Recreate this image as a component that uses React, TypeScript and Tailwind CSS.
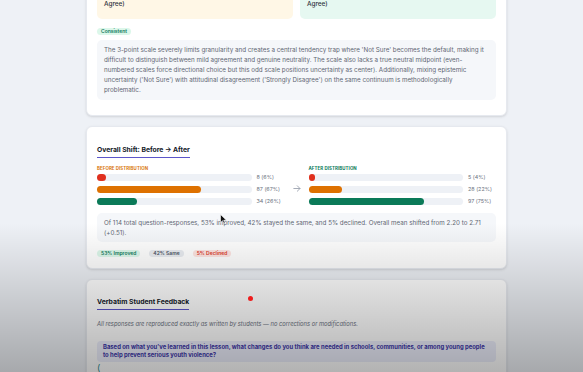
import React from "react";

interface Bar {
  pct: number;
  color: string;
  label: string;
}

const before: Bar[] = [
  { pct: 6, color: "bg-[#e0301e]", label: "8 (6%)" },
  { pct: 67, color: "bg-[#de7100]", label: "87 (67%)" },
  { pct: 26, color: "bg-[#0b7a58]", label: "34 (26%)" },
];

const after: Bar[] = [
  { pct: 4, color: "bg-[#e0301e]", label: "5 (4%)" },
  { pct: 22, color: "bg-[#de7100]", label: "28 (22%)" },
  { pct: 75, color: "bg-[#0b7a58]", label: "97 (75%)" },
];

function Distribution({ title, titleColor, bars }: { title: string; titleColor: string; bars: Bar[] }) {
  return (
    <div className="flex flex-1 flex-col">
      <div className={`text-[4.4px] font-bold uppercase tracking-[0.02em] leading-[6px] mb-[1.5px] ${titleColor}`}>{title}</div>
      <div className="flex flex-col gap-[5px]">
        {bars.map((b) => (
          <div key={b.label} className="flex items-center gap-[5px]">
            <div className="h-[7px] flex-1 rounded-full bg-[#eef1f6]">
              <div className={`h-full rounded-full ${b.color}`} style={{ width: `${b.pct}%` }} />
            </div>
            <span className="w-[28px] text-[5.4px] leading-[7px] text-[#6b7280]">{b.label}</span>
          </div>
        ))}
      </div>
    </div>
  );
}

function SectionTitle({ children }: { children: React.ReactNode }) {
  return (
    <div className="flex">
      <h3 className="border-b-[1.5px] border-[#5b55c9] pb-[3px] text-[6.8px] font-bold leading-[9px] text-[#111827]">
        {children}
      </h3>
    </div>
  );
}

function Pill({ className, children }: { className: string; children: React.ReactNode }) {
  return <span className={`rounded-full px-[4px] text-[5px] font-semibold leading-[7px] ${className}`}>{children}</span>;
}

export default function App() {
  return (
    <div className="relative h-[372px] w-full overflow-hidden bg-[#eef1f6] font-['Inter',sans-serif]">
      <div className="mt-[-35px] flex flex-col gap-[10px] pl-[86px] pr-[76px]">
        {/* Scale critique card */}
        <div className="rounded-[6px] border border-[#e6e9ef] bg-white px-[10px] pt-[18px] pb-[15px] shadow-sm">
          <div className="flex gap-[7px]">
            <div className="flex-1 overflow-hidden rounded-[5px] bg-[#fff7e6] px-[7px] pt-[7px] pb-[10px] text-[6.4px] font-medium leading-[9px] text-[#2f3540]">
              <div className="whitespace-nowrap">Before: 3-point (Strongly Disagree / Not Sure / Strongly</div>
              <div>Agree)</div>
            </div>
            <div className="flex-1 overflow-hidden rounded-[5px] bg-[#e6f8f1] px-[7px] pt-[7px] pb-[10px] text-[6.4px] font-medium leading-[9px] text-[#2f3540]">
              <div className="whitespace-nowrap">After: 3-point (Strongly Disagree / Not Sure / Strongly</div>
              <div>Agree)</div>
            </div>
          </div>
          <div className="mt-[9px] flex">
            <Pill className="bg-[#dcf7ea] font-bold text-[#0f7a5c]">Consistent</Pill>
          </div>
          <div className="mt-[5px] rounded-[5px] bg-[#f5f7fa] px-[7px] pt-[5px] pb-[5px] text-[6.25px] leading-[10px] text-[#5f6673]">
            The 3-point scale severely limits granularity and creates a central tendency trap where 'Not Sure' becomes the default, making it difficult to distinguish between mild agreement and genuine neutrality. The scale also lacks a true neutral midpoint (even-numbered scales force directional choice but this odd scale positions uncertainty as center). Additionally, mixing epistemic uncertainty ('Not Sure') with attitudinal disagreement ('Strongly Disagree') on the same continuum is methodologically problematic.
          </div>
        </div>

        {/* Overall shift card */}
        <div className="rounded-[6px] border border-[#e6e9ef] bg-white px-[10px] pt-[18px] pb-[11px] shadow-sm">
          <SectionTitle>Overall Shift: Before → After</SectionTitle>
          <div className="mt-[8px] flex items-center">
            <Distribution title="Before Distribution" titleColor="text-[#d9770a]" bars={before} />
            <div className="flex w-[24px] justify-center pt-[6px]">
              <svg width="8" height="7" viewBox="0 0 8 7" fill="none" stroke="#9ca3af" strokeWidth="0.9" strokeLinecap="round" strokeLinejoin="round">
                <path d="M0.8 3.5h6.2M4.3 0.8l2.7 2.7-2.7 2.7" />
              </svg>
            </div>
            <Distribution title="After Distribution" titleColor="text-[#0b7a58]" bars={after} />
          </div>
          <div className="mt-[8px] rounded-[5px] bg-[#f5f7fa] px-[7px] pt-[5px] pb-[4px] text-[6.25px] leading-[10px] text-[#5f6673]">
            Of 114 total question-responses, 53% improved, 42% stayed the same, and 5% declined. Overall mean shifted from 2.20 to 2.71 (+0.51).
          </div>
          <div className="mt-[8px] flex gap-[9px]">
            <Pill className="bg-[#dcf7ea] text-[#0f7a5c]">53% Improved</Pill>
            <Pill className="bg-[#e8ebf0] text-[#4b5563]">42% Same</Pill>
            <Pill className="bg-[#fde4e1] text-[#dc3b2b]">5% Declined</Pill>
          </div>
        </div>

        {/* Verbatim feedback card */}
        <div className="rounded-[6px] border border-[#e6e9ef] bg-white px-[10px] pt-[17px] pb-[20px] shadow-sm">
          <SectionTitle>Verbatim Student Feedback</SectionTitle>
          <p className="mt-[10px] text-[5.8px] italic leading-[8px] text-[#6b7280]">
            All responses are reproduced exactly as written by students — no corrections or modifications.
          </p>
          <div className="mt-[13px] rounded-[4px] bg-[#eceefb] px-[6px] pt-[2.5px] pb-[2.5px] text-[5.9px] font-bold leading-[8px] text-[#3b35a8]">
            Based on what you've learned in this lesson, what changes do you think are needed in schools, communities, or among young people to help prevent serious youth violence?
          </div>
          <div className="mt-[1px] text-[9px] leading-[10px] text-[#1f8a8a]">(</div>
        </div>
      </div>

      {/* recording overlays */}
      <div className="pointer-events-none absolute inset-0 bg-linear-to-b from-transparent via-transparent via-60% to-black/30" />
      <div className="pointer-events-none absolute left-[248px] top-[296px] h-[5px] w-[5px] rounded-full bg-[#ee1c1c]" />
      <svg className="pointer-events-none absolute left-[220px] top-[214px]" width="7" height="10" viewBox="0 0 7 10">
        <path d="M0.5 0.5v8l2-1.8 1.4 2.8 1.2-0.6-1.4-2.7h2.7z" fill="#111" stroke="#fff" strokeWidth="0.6" />
      </svg>
    </div>
  );
}
